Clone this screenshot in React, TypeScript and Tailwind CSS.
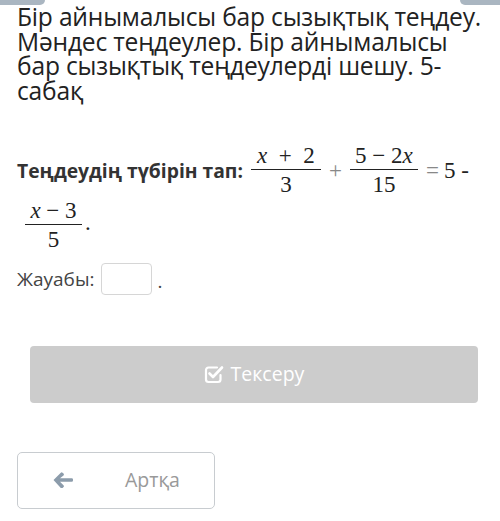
function Frac({ num, den, w }: { num: React.ReactNode; den: React.ReactNode; w: string }) {
  return (
    <span className={`inline-flex flex-col items-center ${w}`}>
      <span className="leading-[26px] px-1">{num}</span>
      <span className="w-full h-px bg-[#222]" />
      <span className="leading-[30px]">{den}</span>
    </span>
  )
}

function CheckIcon() {
  return (
    <svg width="20" height="19" viewBox="0 0 20 19" fill="none" stroke="white" strokeLinecap="round" strokeLinejoin="round">
      <path d="M13 2.5H4.5a2.5 2.5 0 0 0-2.5 2.5v9.5a2.5 2.5 0 0 0 2.5 2.5h9.5a2.5 2.5 0 0 0 2.5-2.5V10" strokeWidth="2.2" />
      <path d="M5.5 8.5l3.5 3.5 9-9.5" strokeWidth="2.6" />
    </svg>
  )
}

function ArrowIcon() {
  return (
    <svg width="20" height="16" viewBox="0 0 20 16" fill="#8c9cab">
      <path d="M0.5 8L7.8 0.7a1.3 1.3 0 0 1 1.8 0l0.9 0.9a1.3 1.3 0 0 1 0 1.8L7 6.2h11.7a1.3 1.3 0 0 1 1.3 1.3v1a1.3 1.3 0 0 1-1.3 1.3H7l3.5 3.5a1.3 1.3 0 0 1 0 1.8l-0.9 0.9a1.3 1.3 0 0 1-1.8 0Z" />
    </svg>
  )
}

export default function App() {
  const serif = "font-['Liberation_Serif',serif] text-[23px] text-[#222]"
  return (
    <main className="relative w-[500px] h-[521px] bg-white font-['Open_Sans',sans-serif] overflow-hidden">
      <div className="absolute top-0 left-0 w-[45px] h-[5px] bg-[#aab6c1] rounded-br-md" />
      <div className="absolute top-0 right-0 w-[40px] h-[5px] bg-[#aab6c1] rounded-bl-md" />

      <div className="px-[17px] pt-[5px]">
        <h1 className="text-[24.6px] leading-[24.5px] text-[#222] tracking-[-0.2px] mr-[-10px]">
          Бір айнымалысы бар сызықтық теңдеу. Мәндес теңдеулер. Бір айнымалысы бар сызықтық теңдеулерді шешу. 5-сабақ
        </h1>

        <div className="mt-[40px] flex items-center">
          <span className="text-[19.3px] font-bold text-[#333] mr-[8px]">Теңдеудің түбірін тап:</span>
          <span className={`${serif} flex items-center`}>
            <Frac w="w-[70px]" num={<><i>x</i>&nbsp;&nbsp;+&nbsp;&nbsp;2</>} den="3" />
            <span className="mx-[8px] text-[#888]">+</span>
            <Frac w="w-[68px]" num={<>5 −&nbsp;2<i>x</i></>} den="15" />
            <span className="ml-[8px] text-[#888]">=</span>
            <span className="ml-[5px]">5 -</span>
          </span>
        </div>
        <div className={`${serif} flex items-center mt-[-2px] ml-[8px]`}>
          <Frac w="w-[57px]" num={<><i>x</i> − 3</>} den="5" />
          <span className="ml-[3px] mb-[6px]">.</span>
        </div>

        <div className="mt-[8px] flex items-center text-[19px] text-[#444]">
          <span>Жауабы:</span>
          <span className="ml-[6px] w-[51px] h-[32px] border border-[#d6d6d6] rounded-[4px]" />
          <span className="ml-[6px] mt-[4px]">.</span>
        </div>
      </div>

      <div className="px-[30px] mt-[50px] pr-[22px]">
        <button className="w-full h-[57px] bg-[#cccccc] rounded-[4px] flex items-center justify-center gap-[7px] text-white text-[19.5px]">
          <CheckIcon />
          <span>Тексеру</span>
        </button>
      </div>

      <div className="px-[17px] mt-[49px]">
        <button className="w-[198px] h-[57px] border border-[#c8ccd0] rounded-[5px] bg-white flex items-center text-[19.5px] text-[#999]">
          <span className="ml-[35px]"><ArrowIcon /></span>
          <span className="ml-[52px]">Артқа</span>
        </button>
      </div>
    </main>
  )
}
